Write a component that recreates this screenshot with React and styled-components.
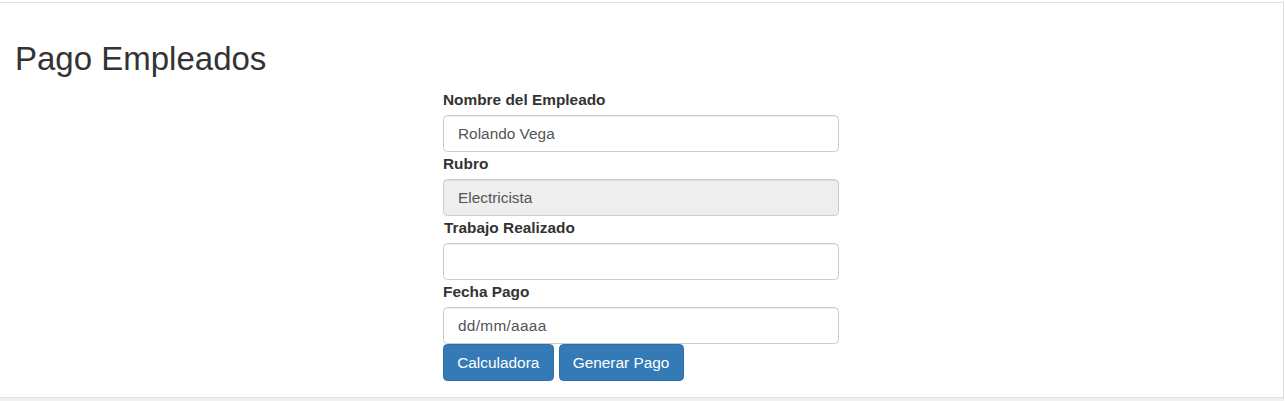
import React from "react";
import styled, { createGlobalStyle } from "styled-components";

/* Bootstrap 3 look, rendered at 110% zoom */
const GlobalStyle = createGlobalStyle`
  * { box-sizing: border-box; }
  html, body { margin: 0; padding: 0; background: #fff; }
  body {
    font-family: "Liberation Sans", Arial, sans-serif;
    font-size: 15.4px;
    line-height: 1.42857;
    color: #333;
  }
`;

const Page = styled.div`
  width: 1285px;
  height: 401px;
  padding-top: 2px;
  display: flex;
  flex-direction: column;
  overflow: hidden;
`;

const Frame = styled.main`
  width: 1284px;
  height: 395px;
  border-top: 1px solid #e2e2e2;
  border-right: 1px solid #dcdcdc;
  padding: 16px 1px 0 0;
  background: #fff;
`;

const BottomBar = styled.div`
  flex: 1;
  width: 1284px;
  background: #f0f0f0;
  border-top: 1px solid #e0e0e0;
`;

const Title = styled.h2`
  margin: 22px 0 11px;
  padding-left: 15px;
  font-size: 33px;
  font-weight: 400;
  line-height: 1.1;
  color: #333;
`;

const Form = styled.form`
  width: 396px;
  margin: 0 auto;
  display: flex;
  flex-direction: column;
`;

const Label = styled.label`
  display: block;
  font-weight: 700;
  font-size: 15.4px;
  line-height: 22px;
  padding-top: 1px;
  margin-bottom: 4px;
  padding-left: ${({ $shift }) => ($shift ? "1px" : "0")};
  color: #333;
`;

const Input = styled.input`
  display: block;
  width: 100%;
  height: 37px;
  padding: 6.6px 13px 6.6px 14px;
  font-family: "Liberation Sans", Arial, sans-serif;
  font-size: 15.4px;
  color: #555;
  background: ${({ disabled }) => (disabled ? "#eee" : "#fff")};
  border: 1px solid #ccc;
  border-radius: 4.4px;
  box-shadow: inset 0 1px 1px rgba(0, 0, 0, 0.075);
  outline: none;
  &::placeholder { color: #555; letter-spacing: 0.3px; }
`;

const Actions = styled.div`
  display: flex;
  gap: 5px;
`;

const Button = styled.button`
  height: 37px;
  padding: 6.6px 13.2px;
  font-family: "Liberation Sans", Arial, sans-serif;
  font-size: 15.4px;
  line-height: 1.42857;
  color: #fff;
  background: #337ab7;
  border: 1px solid #2e6da4;
  border-radius: 4.4px;
  cursor: pointer;
`;

const fields = [
  { label: "Nombre del Empleado", value: "Rolando Vega" },
  { label: "Rubro", value: "Electricista", disabled: true },
  { label: "Trabajo Realizado", value: "", shift: true },
  { label: "Fecha Pago", placeholder: "dd/mm/aaaa" },
];

export default function App() {
  return (
    <>
      <GlobalStyle />
      <Page>
        <Frame>
          <Title>Pago Empleados</Title>
          <Form onSubmit={(e) => e.preventDefault()}>
            {fields.map((f) => (
              <div key={f.label}>
                <Label $shift={f.shift}>{f.label}</Label>
                <Input
                  type="text"
                  defaultValue={f.value}
                  placeholder={f.placeholder}
                  disabled={f.disabled}
                />
              </div>
            ))}
            <Actions>
              <Button type="button">Calculadora</Button>
              <Button type="button">Generar Pago</Button>
            </Actions>
          </Form>
        </Frame>
        <BottomBar />
      </Page>
    </>
  );
}
